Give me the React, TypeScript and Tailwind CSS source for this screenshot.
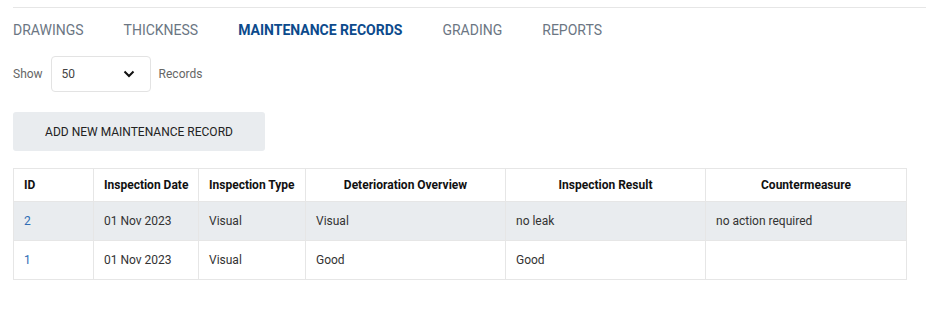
import React from "react";

const rows = [
  { id: "2", date: "01 Nov 2023", type: "Visual", det: "Visual", res: "no leak", cm: "no action required" },
  { id: "1", date: "01 Nov 2023", type: "Visual", det: "Good", res: "Good", cm: "" },
];

export default function App() {
  const tabs = ["DRAWINGS", "THICKNESS", "MAINTENANCE RECORDS", "GRADING", "REPORTS"];
  return (
    <div className="bg-white w-[926px] h-[320px] pl-[13px] pt-[7px] text-[#333]" style={{ fontFamily: "Roboto, 'Liberation Sans', sans-serif" }}>
      <div className="border-t border-[#e6e6e6]" />
      <div className="flex items-center h-[43px] pt-[1px] gap-[40px] text-[14px]">
        {tabs.map((t, i) => (
          <span key={t} className={i === 2 ? "font-bold text-[#0c4a8c]" : "text-[#6b7683]"}>{t}</span>
        ))}
      </div>
      <div className="flex items-center h-[36px] mt-[5px] text-[12px] text-[#666]">
        <span>Show</span>
        <div className="ml-[8px] w-[100px] h-[36px] border border-[#e3e3e3] rounded-[4px] flex items-center justify-between pl-[10px] pr-[15px] text-[#444]">
          <span>50</span>
          <svg width="12" height="8" viewBox="0 0 12 8" fill="none"><path d="M1.5 1.5 L6 6 L10.5 1.5" stroke="#111" strokeWidth="2" /></svg>
        </div>
        <span className="ml-[8px]">Records</span>
      </div>
      <div className="mt-[20px] w-[252px] h-[39px] bg-[#e9ecef] rounded-[3px] flex items-center justify-center text-[12px] text-[#222]">
        ADD NEW MAINTENANCE RECORD
      </div>
      <table className="mt-[17px] border-collapse text-[12px] table-fixed w-[893px] whitespace-nowrap">
        <colgroup>
          <col className="w-[80px]" />
          <col className="w-[105px]" />
          <col className="w-[107px]" />
          <col className="w-[200px]" />
          <col className="w-[200px]" />
          <col className="w-[201px]" />
        </colgroup>
        <thead>
          <tr className="h-[33px] font-bold text-[#111]">
            <th className="border border-[#e6e6e6] text-left px-[10px]">ID</th>
            <th className="border border-[#e6e6e6] text-left px-[10px]">Inspection Date</th>
            <th className="border border-[#e6e6e6] text-left px-[10px]">Inspection Type</th>
            <th className="border border-[#e6e6e6] text-center px-[10px]">Deterioration Overview</th>
            <th className="border border-[#e6e6e6] text-center px-[10px]">Inspection Result</th>
            <th className="border border-[#e6e6e6] text-center px-[10px]">Countermeasure</th>
          </tr>
        </thead>
        <tbody>
          {rows.map((r, i) => (
            <tr key={r.id} className={"h-[39px] " + (i === 0 ? "bg-[#e9ecef]" : "bg-white")}>
              <td className="border border-[#e6e6e6] px-[10px] text-[#2f6db5]">{r.id}</td>
              <td className="border border-[#e6e6e6] px-[10px]">{r.date}</td>
              <td className="border border-[#e6e6e6] px-[10px]">{r.type}</td>
              <td className="border border-[#e6e6e6] px-[10px]">{r.det}</td>
              <td className="border border-[#e6e6e6] px-[10px]">{r.res}</td>
              <td className="border border-[#e6e6e6] px-[10px]">{r.cm}</td>
            </tr>
          ))}
        </tbody>
      </table>
    </div>
  );
}
